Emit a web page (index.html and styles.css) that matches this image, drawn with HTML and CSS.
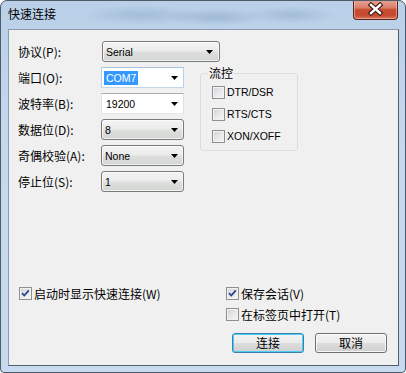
FILE: index.html
```html
<!DOCTYPE html>
<html lang="zh-CN">
<head>
<meta charset="utf-8">
<title>快速连接</title>
<link rel="stylesheet" href="styles.css">
</head>
<body>
<div class="window">
  <div class="titlebar">
    <span class="title">快速连接</span>
    <div class="close">
      <svg width="43" height="19" viewBox="0 0 43 19">
        <path d="M17 5 L26 13 M26 5 L17 13" stroke="#3b1a14" stroke-width="4.6" stroke-linecap="square" fill="none"/>
        <path d="M17 5 L26 13 M26 5 L17 13" stroke="#ffffff" stroke-width="2.4" stroke-linecap="square" fill="none"/>
      </svg>
    </div>
  </div>
  <div class="client">
    <div class="form">
      <div class="proto">
        <span class="label label-proto">协议(P):</span>
        <div class="combo list wide"><span class="val">Serial</span><svg class="arrow" width="7" height="4" viewBox="0 0 7 4"><path d="M0 0h7L3.5 4z"/></svg></div>
      </div>
      <div class="mid">
        <div class="fields">
          <span class="label">端口(O):</span>
          <div class="combo edit focus"><span class="val"><span class="sel">COM7</span></span><svg class="arrow" width="7" height="4" viewBox="0 0 7 4"><path d="M0 0h7L3.5 4z"/></svg></div>
          <span class="label">波特率(B):</span>
          <div class="combo edit"><span class="val">19200</span><svg class="arrow" width="7" height="4" viewBox="0 0 7 4"><path d="M0 0h7L3.5 4z"/></svg></div>
          <span class="label">数据位(D):</span>
          <div class="combo list"><span class="val">8</span><svg class="arrow" width="7" height="4" viewBox="0 0 7 4"><path d="M0 0h7L3.5 4z"/></svg></div>
          <span class="label">奇偶校验(A):</span>
          <div class="combo list"><span class="val">None</span><svg class="arrow" width="7" height="4" viewBox="0 0 7 4"><path d="M0 0h7L3.5 4z"/></svg></div>
          <span class="label">停止位(S):</span>
          <div class="combo list"><span class="val">1</span><svg class="arrow" width="7" height="4" viewBox="0 0 7 4"><path d="M0 0h7L3.5 4z"/></svg></div>
        </div>
        <fieldset class="flow">
          <legend>流控</legend>
          <div class="check"><span class="box"></span><span class="ctext">DTR/DSR</span></div>
          <div class="check"><span class="box"></span><span class="ctext">RTS/CTS</span></div>
          <div class="check"><span class="box"></span><span class="ctext">XON/XOFF</span></div>
        </fieldset>
      </div>
    </div>
    <div class="bottom">
      <div class="opts">
        <div class="check zh"><span class="box checked"><svg width="11" height="11" viewBox="0 0 11 11"><path d="M2 5.2 L4.3 7.6 L8.8 2.4" stroke="#2c3f86" stroke-width="1.7" fill="none"/></svg></span><span class="ctext">启动时显示快速连接(W)</span></div>
        <div class="check zh"><span class="box checked"><svg width="11" height="11" viewBox="0 0 11 11"><path d="M2 5.2 L4.3 7.6 L8.8 2.4" stroke="#2c3f86" stroke-width="1.7" fill="none"/></svg></span><span class="ctext">保存会话(V)</span></div>
        <div class="spacer"></div>
        <div class="check zh"><span class="box"></span><span class="ctext">在标签页中打开(T)</span></div>
      </div>
      <div class="buttons">
        <div class="btn default">连接</div>
        <div class="btn">取消</div>
      </div>
    </div>
  </div>
</div>
</body>
</html>
```
FILE: styles.css
```css
html, body {
  margin: 0;
  padding: 0;
  background: #ffffff;
}

.window {
  width: 406px;
  height: 373px;
  box-sizing: border-box;
  border: 1px solid #4e5b69;
  border-radius: 7px 7px 4px 4px;
  background:
    radial-gradient(ellipse 60px 10px at 140px 14px, rgba(120,150,185,0.35), transparent),
    radial-gradient(ellipse 50px 9px at 215px 16px, rgba(110,140,175,0.35), transparent),
    radial-gradient(ellipse 45px 9px at 290px 14px, rgba(110,140,175,0.3), transparent),
    linear-gradient(to bottom, #b9d0e8 0%, #c5d9ee 40%, #c7daef 100%);
  display: flex;
  flex-direction: column;
  font-family: "Noto Sans CJK SC", "Liberation Sans", sans-serif;
  overflow: hidden;
}

.titlebar {
  height: 28px;
  display: flex;
  justify-content: space-between;
  align-items: flex-start;
  flex: none;
}

.title {
  padding: 6px 0 0 7px;
  font-size: 12px;
  line-height: 14px;
  color: #000;
}

.close {
  width: 45px;
  height: 20px;
  box-sizing: border-box;
  margin: -1px 7px 0 0;
  border: 1px solid #5e241b;
  border-top: none;
  border-radius: 0 0 4px 4px;
  background: linear-gradient(to bottom, #e6a596 0%, #d97e6b 40%, #c8492f 52%, #c44a31 80%, #d9785c 100%);
  box-shadow: inset 0 0 0 1px rgba(255, 220, 210, 0.45);
  display: flex;
  align-items: center;
  justify-content: center;
}

.close svg {
  display: block;
}

.client {
  margin: 0 6px 0 7px;
  height: 337px;
  box-sizing: border-box;
  border: 1px solid;
  border-color: #8b9bad #4f5e6f #4f5e6f #8b9bad;
  background: #f0f0f0;
  display: flex;
  flex-direction: column;
}

.form {
  padding: 11px 0 0 9px;
}

.proto {
  display: flex;
  align-items: center;
  height: 21px;
}

.label {
  font-size: 12px;
  line-height: 21px;
  color: #000;
  white-space: nowrap;
}

.label-proto {
  width: 84px;
}

.mid {
  display: flex;
  align-items: flex-start;
  margin-top: 5px;
}

.fields {
  display: grid;
  grid-template-columns: 83px 83px;
  grid-auto-rows: 21px;
  row-gap: 5px;
  align-items: center;
}

.combo {
  height: 21px;
  box-sizing: border-box;
  display: flex;
  align-items: center;
  justify-content: space-between;
  font-family: "Liberation Sans", sans-serif;
  font-size: 10.5px;
  color: #000;
}

.combo .val {
  padding-left: 3px;
}

.combo .arrow {
  display: block;
  margin-right: 5px;
}

.combo.wide {
  width: 118px;
}

.combo.wide .arrow {
  margin-right: 6px;
}

.combo.list {
  border: 1px solid #7a7a7a;
  border-radius: 3px;
  background: linear-gradient(to bottom, #f3f3f3 0%, #ebebeb 48%, #dde0dd 52%, #d2d6d2 100%);
  box-shadow: inset 0 0 0 1px rgba(255, 255, 255, 0.7);
}

.combo.edit {
  border: 1px solid;
  border-color: #abadb3 #dbdfe6 #e3e9ef #e2e3ea;
  background: #ffffff;
}

.combo.edit .val {
  padding-left: 4px;
}

.combo.focus {
  border-color: #a6c3df #b9d1e7 #c3d7ea #b9d1e7;
}

.combo.focus .val {
  padding-left: 2px;
}

.sel {
  background: #3399ff;
  color: #ffffff;
  padding: 1px 2px;
}

.flow {
  margin: -1px 0 0 16px;
  width: 98px;
  box-sizing: border-box;
  border: 1px solid #d5dfe5;
  border-radius: 3px;
  padding: 0 0 7px 11px;
  display: flex;
  flex-direction: column;
  gap: 9px;
}

.flow legend {
  font-size: 12px;
  line-height: 14px;
  padding: 0 1px;
  margin-left: -4px;
  color: #000;
}

.flow .check:first-of-type {
  margin-top: 6px;
}

.check {
  display: flex;
  align-items: center;
  height: 13px;
  gap: 2px;
}

.ctext {
  font-family: "Liberation Sans", sans-serif;
  font-size: 10.5px;
  line-height: 13px;
  color: #000;
  white-space: nowrap;
}

.check.zh .ctext {
  font-family: "Noto Sans CJK SC", "Liberation Sans", sans-serif;
  font-size: 12px;
}

.box {
  width: 13px;
  height: 13px;
  flex: none;
  box-sizing: border-box;
  border: 1px solid #8f8f8f;
  background: linear-gradient(135deg, #cfd2d7 0%, #e6e7e9 50%, #f7f7f7 100%);
  box-shadow: inset 0 0 0 1px #f2f2f2;
  display: flex;
  align-items: center;
  justify-content: center;
}

.box svg {
  display: block;
}

.bottom {
  margin-top: auto;
  padding: 0 11px 12px 10px;
}

.opts {
  display: grid;
  grid-template-columns: 207px 1fr;
  grid-auto-rows: 13px;
  row-gap: 8px;
}

.buttons {
  display: flex;
  justify-content: flex-end;
  gap: 11px;
  margin-top: 12px;
}

.btn {
  width: 72px;
  height: 20px;
  box-sizing: border-box;
  border: 1px solid #707070;
  border-radius: 3px;
  background: linear-gradient(to bottom, #f2f2f2 0%, #ebebeb 48%, #dddddd 52%, #cfcfcf 100%);
  box-shadow: inset 0 0 0 1px rgba(255, 255, 255, 0.8);
  font-size: 12px;
  line-height: 18px;
  text-align: center;
  color: #000;
}

.btn.default {
  border-color: #3c7fb1;
  box-shadow: inset 0 0 0 1px #4bd0f5;
}
```
